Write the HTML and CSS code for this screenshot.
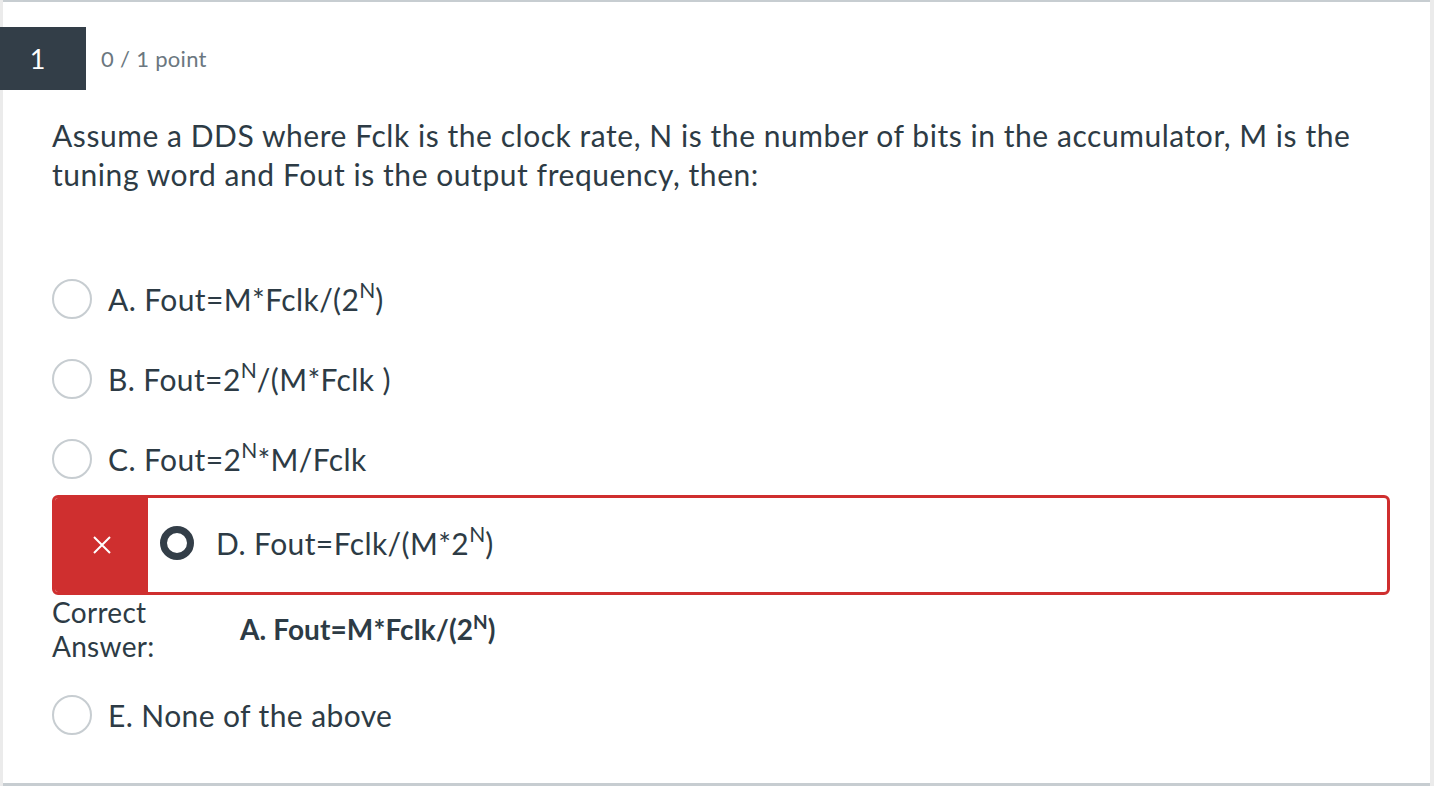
FILE: index.html
```html
<!DOCTYPE html>
<html>
<head>
<meta charset="utf-8">
<link rel="stylesheet" href="styles.css">
</head>
<body>
<div class="page">
  <div class="card">
    <div class="header">
      <div class="qnum">1</div>
      <div class="points">0 / 1 point</div>
    </div>
    <div class="qtext">Assume a DDS where Fclk is the clock rate, N is the number of bits in the accumulator, M is the tuning word and Fout is the output frequency, then:</div>
    <div class="answers">
      <div class="opt"><span class="radio"></span><span class="label">A. Fout=M*Fclk/(2<sup>N</sup>)</span></div>
      <div class="opt"><span class="radio"></span><span class="label">B. Fout=2<sup>N</sup>/(M*Fclk )</span></div>
      <div class="opt"><span class="radio"></span><span class="label">C. Fout=2<sup>N</sup>*M/Fclk</span></div>
      <div class="wrong">
        <div class="wrong-mark">
          <svg width="20" height="20" viewBox="0 0 20 20"><path d="M2 2 L18 18 M18 2 L2 18" stroke="#fff" stroke-width="2" fill="none"/></svg>
        </div>
        <div class="wrong-body"><span class="radio checked"></span><span class="label">D. Fout=Fclk/(M*2<sup>N</sup>)</span></div>
      </div>
      <div class="correct">
        <div class="correct-label">Correct<br>Answer:</div>
        <div class="correct-text">A. Fout=M*Fclk/(2<sup>N</sup>)</div>
      </div>
      <div class="opt last"><span class="radio"></span><span class="label">E. None of the above</span></div>
    </div>
  </div>
</div>
</body>
</html>
```

FILE: styles.css
```css
html, body {
  margin: 0;
  padding: 0;
  background: #fff;
}
body {
  font-family: Lato, "Open Sans", sans-serif;
  color: #2d3b45;
}
.page {
  width: 1434px;
  height: 786px;
  background: #ebebeb;
  padding: 0 4px 0 3px;
  box-sizing: border-box;
}
.card {
  height: 786px;
  background: #fff;
  border-top: 2px solid #c7cdd1;
  border-bottom: 3px solid #c7cdd1;
  box-sizing: border-box;
  padding-top: 25px;
}
.header {
  display: flex;
  align-items: center;
  height: 63px;
  margin-left: -3px;
}
.qnum {
  width: 86px;
  height: 63px;
  background: #333e48;
  color: #fff;
  font-size: 27px;
  display: flex;
  align-items: center;
  justify-content: center;
  box-sizing: border-box;
  padding-right: 11px;
}
.points {
  margin-left: 15px;
  font-size: 22px;
  color: #6b7780;
  letter-spacing: 0.3px;
}
.qtext {
  padding: 26px 40px 0 49px;
  font-size: 30px;
  line-height: 39px;
  letter-spacing: 0.55px;
}
.answers {
  padding: 85px 40px 0 49px;
}
.opt {
  display: flex;
  align-items: center;
  height: 40px;
  margin-bottom: 40px;
}
.radio {
  width: 36px;
  height: 36px;
  border: 2px solid #c7cdd1;
  border-radius: 50%;
  flex: none;
  background: #fff;
}
.label {
  margin-left: 16px;
  font-size: 30px;
  letter-spacing: 0.4px;
}
sup {
  font-size: 21px;
  line-height: 0;
  vertical-align: 0;
  position: relative;
  top: -0.6em;
  letter-spacing: 0;
}
.wrong {
  display: flex;
  height: 100px;
  border: 3px solid #cf2f2f;
  border-radius: 6px;
  box-sizing: border-box;
  margin-top: -24px;
  overflow: hidden;
}
.wrong-mark {
  width: 93px;
  background: #cf2f2f;
  display: flex;
  align-items: center;
  justify-content: center;
  flex: none;
}
.wrong-body {
  display: flex;
  align-items: center;
  padding-left: 12px;
  padding-bottom: 4px;
}
.radio.checked {
  width: 20px;
  height: 20px;
  border: 7px solid #333e48;
}
.wrong-body .label {
  margin-left: 22px;
}
.correct {
  display: flex;
  align-items: center;
  margin-top: 0;
  font-size: 28px;
  line-height: 34px;
}
.correct-label {
  width: 188px;
  letter-spacing: 0.3px;
}
.correct-text {
  font-weight: bold;
  font-size: 28px;
  letter-spacing: 0.1px;
}
.correct-text sup {
  font-size: 19px;
}
.opt.last {
  margin-top: 32px;
}
```
